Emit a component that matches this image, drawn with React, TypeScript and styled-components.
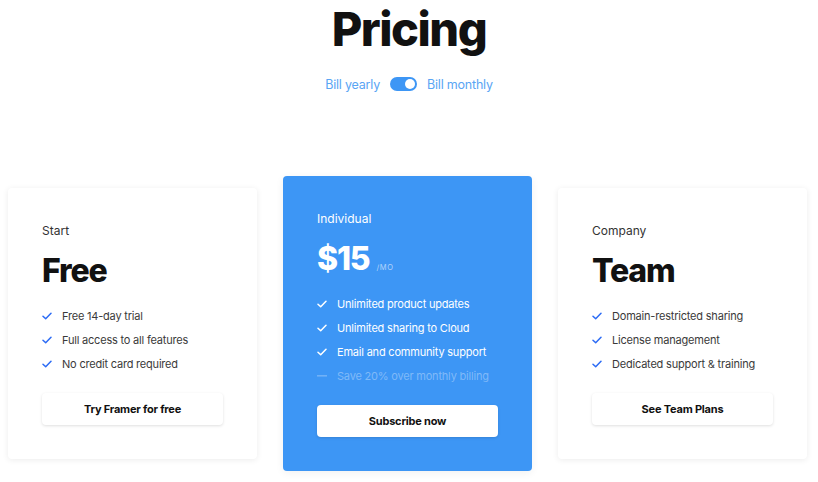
import React, { useState } from "react";
import styled, { createGlobalStyle } from "styled-components";

const GlobalStyle = createGlobalStyle`
  * { box-sizing: border-box; }
  body {
    margin: 0;
    background: #fff;
    font-family: Inter, "Noto Sans", sans-serif;
    -webkit-font-smoothing: antialiased;
  }
`;

const Page = styled.div`
  width: 818px;
  height: 482px;
  overflow: hidden;
`;

const Title = styled.h1`
  margin: 0;
  text-align: center;
  font-size: 47px;
  line-height: 58px;
  font-weight: 800;
  letter-spacing: -1.5px;
  color: #111;
`;

const BillingRow = styled.div`
  margin-top: 16px;
  height: 20px;
  display: flex;
  align-items: center;
  justify-content: center;
  gap: 10px;
`;

const BillLabel = styled.span`
  font-size: 12.5px;
  letter-spacing: -0.2px;
  color: #5aa5f4;
`;

const Toggle = styled.button<{ on: boolean }>`
  position: relative;
  width: 27px;
  height: 14px;
  padding: 0;
  border: none;
  border-radius: 7px;
  background: #3d96f5;
  cursor: pointer;

  &::after {
    content: "";
    position: absolute;
    top: 2px;
    left: ${(p) => (p.on ? "15px" : "2px")};
    width: 10px;
    height: 10px;
    border-radius: 50%;
    background: #fff;
  }
`;

const Cards = styled.div`
  margin-top: 82px;
  padding: 0 8px;
  display: flex;
  align-items: center;
  gap: 26px;
`;

const Card = styled.div<{ featured?: boolean }>`
  width: 249px;
  padding: 34px 34px 34px;
  border-radius: 4px;
  background: ${(p) => (p.featured ? "#3d96f5" : "#fff")};
  box-shadow: ${(p) =>
    p.featured
      ? "0 2px 8px rgba(0, 0, 0, 0.06)"
      : "0 1px 6px rgba(0, 0, 0, 0.08)"};
  color: ${(p) => (p.featured ? "#fff" : "#333")};
`;

const PlanName = styled.div`
  font-size: 12px;
  line-height: 18px;
`;

const PriceRow = styled.div`
  margin-top: 11px;
  display: flex;
  align-items: baseline;
  gap: 7px;
  height: 40px;
`;

const Price = styled.div<{ featured?: boolean }>`
  font-size: 32px;
  line-height: 40px;
  font-weight: 800;
  letter-spacing: -1.2px;
  color: ${(p) => (p.featured ? "#fff" : "#111")};
`;

const Period = styled.span`
  font-size: 7.5px;
  letter-spacing: 0.6px;
  color: rgba(255, 255, 255, 0.6);
`;

const Features = styled.ul`
  list-style: none;
  margin: 13px 0 0;
  padding: 0;
`;

const Feature = styled.li<{ featured?: boolean; muted?: boolean }>`
  display: flex;
  align-items: center;
  gap: 10px;
  height: 24px;
  font-size: 11px;
  letter-spacing: -0.2px;
  white-space: nowrap;
  color: ${(p) =>
    p.featured
      ? p.muted
        ? "rgba(255, 255, 255, 0.35)"
        : "#fff"
      : "#3a3a3a"};
`;

const Mark = styled.span`
  width: 10px;
  display: flex;
  align-items: center;
  justify-content: center;
`;

const CTA = styled.button`
  margin-top: 17px;
  width: 100%;
  height: 32px;
  border: none;
  border-radius: 4px;
  background: #fff;
  box-shadow: 0 1px 3px rgba(0, 0, 0, 0.13);
  font-family: inherit;
  font-size: 11px;
  font-weight: 700;
  letter-spacing: -0.2px;
  color: #111;
  cursor: pointer;
`;

const Check = ({ color }: { color: string }) => (
  <svg width="10" height="8" viewBox="0 0 10 8" fill="none">
    <path
      d="M1 4.2 L3.7 6.8 L9 1.2"
      stroke={color}
      strokeWidth="1.5"
      strokeLinecap="round"
      strokeLinejoin="round"
    />
  </svg>
);

const Dash = () => (
  <svg width="10" height="2" viewBox="0 0 10 2">
    <rect x="0" y="0.25" width="10" height="1.2" fill="rgba(255,255,255,0.35)" />
  </svg>
);

type Plan = {
  name: string;
  price: string;
  period?: string;
  featured?: boolean;
  features: string[];
  extra?: string;
  cta: string;
};

const plans: Plan[] = [
  {
    name: "Start",
    price: "Free",
    features: ["Free 14-day trial", "Full access to all features", "No credit card required"],
    cta: "Try Framer for free",
  },
  {
    name: "Individual",
    price: "$15",
    period: "/MO",
    featured: true,
    features: ["Unlimited product updates", "Unlimited sharing to Cloud", "Email and community support"],
    extra: "Save 20% over monthly billing",
    cta: "Subscribe now",
  },
  {
    name: "Company",
    price: "Team",
    features: ["Domain-restricted sharing", "License management", "Dedicated support & training"],
    cta: "See Team Plans",
  },
];

export default function App() {
  const [monthly, setMonthly] = useState(true);

  return (
    <Page>
      <GlobalStyle />
      <Title>Pricing</Title>
      <BillingRow>
        <BillLabel>Bill yearly</BillLabel>
        <Toggle on={monthly} onClick={() => setMonthly(!monthly)} aria-label="Billing period" />
        <BillLabel>Bill monthly</BillLabel>
      </BillingRow>
      <Cards>
        {plans.map((plan) => (
          <Card key={plan.name} featured={plan.featured}>
            <PlanName>{plan.name}</PlanName>
            <PriceRow>
              <Price featured={plan.featured}>{plan.price}</Price>
              {plan.period && <Period>{plan.period}</Period>}
            </PriceRow>
            <Features>
              {plan.features.map((f) => (
                <Feature key={f} featured={plan.featured}>
                  <Mark>
                    <Check color={plan.featured ? "#fff" : "#2d6cf5"} />
                  </Mark>
                  {f}
                </Feature>
              ))}
              {plan.extra && (
                <Feature featured muted>
                  <Mark>
                    <Dash />
                  </Mark>
                  {plan.extra}
                </Feature>
              )}
            </Features>
            <CTA>{plan.cta}</CTA>
          </Card>
        ))}
      </Cards>
    </Page>
  );
}
